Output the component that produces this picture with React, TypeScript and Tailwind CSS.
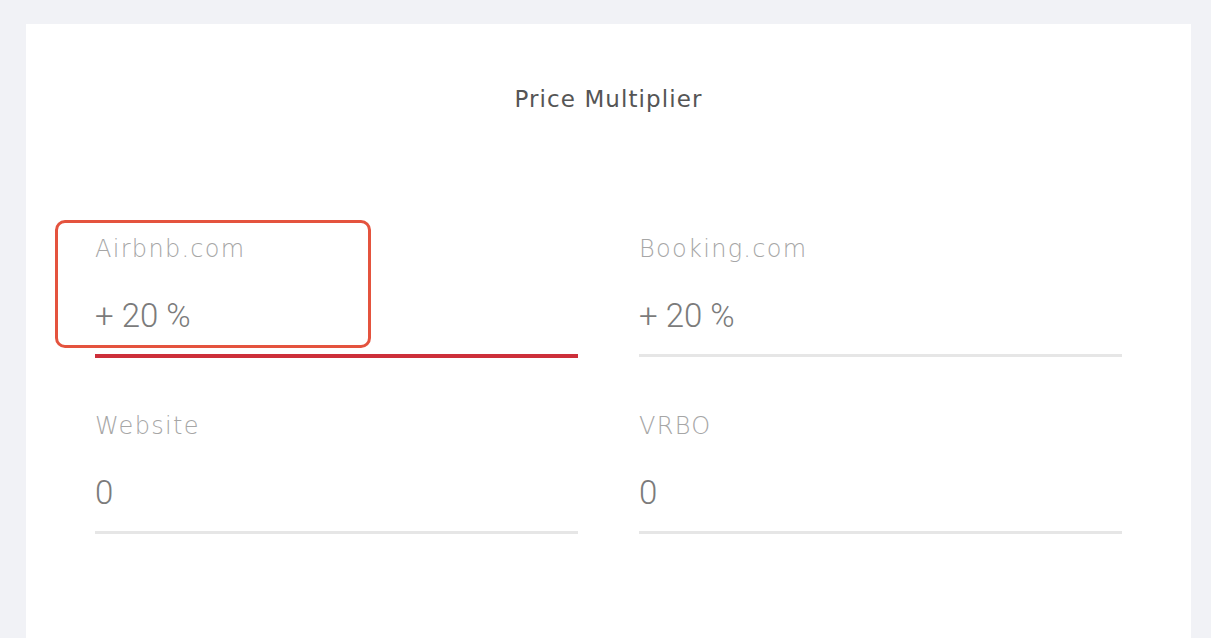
const fields = [
  { label: "Airbnb.com", value: "+ 20 %", focused: true },
  { label: "Booking.com", value: "+ 20 %", focused: false },
  { label: "Website", value: "0", focused: false },
  { label: "VRBO", value: "0", focused: false },
];

const Field = ({
  label,
  value,
  focused,
}: {
  label: string;
  value: string;
  focused: boolean;
}) => {
  return (
    <div className="relative">
      {focused && (
        <div className="pointer-events-none absolute left-[-40px] top-[-14px] h-[128px] w-[316px] rounded-[10px] border-[3px] border-[#e4533e]" />
      )}
      <div className="h-[30px] font-['DejaVu_Sans',sans-serif] text-[24px] font-extralight leading-[30px] tracking-[1.3px] text-[#a6a6a6]">
        {label}
      </div>
      <div className="mt-[32px] h-[40px] font-['Roboto',sans-serif] text-[33px] font-light leading-[40px] text-[#7b7b7b]">
        {value}
      </div>
      {focused ? (
        <div className="mt-[18px] h-[4px] bg-[#cd2f3a]" />
      ) : (
        <div className="mt-[18px] h-[3px] bg-[#e6e6e6]" />
      )}
    </div>
  );
};

const App = () => {
  return (
    <div className="min-h-[638px] bg-[#f1f2f6] pl-[26px] pr-[20px] pt-[24px]">
      <div className="min-h-[614px] bg-white px-[69px] pt-[60px]">
        <h2 className="text-center font-['DejaVu_Sans',sans-serif] text-[23px] leading-[30px] tracking-[1.1px] text-[#555]">
          Price Multiplier
        </h2>
        <div className="mt-[120px] grid grid-cols-2 gap-x-[61px] gap-y-[53px]">
          {fields.map((f) => (
            <Field key={f.label} {...f} />
          ))}
        </div>
      </div>
    </div>
  );
};

export default App;
